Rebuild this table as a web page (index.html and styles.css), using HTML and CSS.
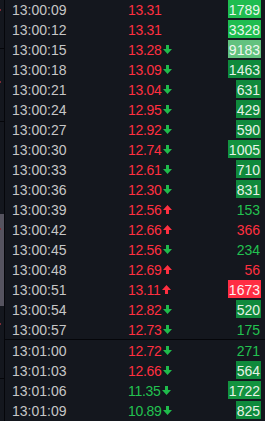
FILE: index.html
```html
<!DOCTYPE html>
<html>
<head>
<meta charset="utf-8">
<link rel="stylesheet" href="styles.css">
</head>
<body>
<div class="screen">
  <div class="strip">
    <div class="seg s1"><i class="dot d9"></i></div>
    <div class="hl"></div>
    <div class="seg s2"><i class="dot d32"></i></div>
    <div class="hl"></div>
    <div class="seg s3"></div>
    <div class="seg grey"><i class="dot d14"></i></div>
    <div class="seg s4"><i class="dot d17"></i></div>
    <div class="hl"></div>
    <div class="seg s5"></div>
  </div>
  <div class="list">
    <div class="row"><span class="time">13:00:09</span><span class="price red">13.31</span><span class="vol bg-bright">1789</span></div>
    <div class="row"><span class="time">13:00:12</span><span class="price red">13.31</span><span class="vol bg-bright">3328</span></div>
    <div class="row"><span class="time">13:00:15</span><span class="price red">13.28<svg class="arrow dn" viewBox="0 0 9 9"><path d="M3 0h3v4h3L4.5 9 0 4h3z"/></svg></span><span class="vol bg-pale">9183</span></div>
    <div class="row"><span class="time">13:00:18</span><span class="price red">13.09<svg class="arrow dn" viewBox="0 0 9 9"><path d="M3 0h3v4h3L4.5 9 0 4h3z"/></svg></span><span class="vol bg-dark">1463</span></div>
    <div class="row"><span class="time">13:00:21</span><span class="price red">13.04<svg class="arrow dn" viewBox="0 0 9 9"><path d="M3 0h3v4h3L4.5 9 0 4h3z"/></svg></span><span class="vol bg-dark">631</span></div>
    <div class="row"><span class="time">13:00:24</span><span class="price red">12.95<svg class="arrow dn" viewBox="0 0 9 9"><path d="M3 0h3v4h3L4.5 9 0 4h3z"/></svg></span><span class="vol bg-dark">429</span></div>
    <div class="row"><span class="time">13:00:27</span><span class="price red">12.92<svg class="arrow dn" viewBox="0 0 9 9"><path d="M3 0h3v4h3L4.5 9 0 4h3z"/></svg></span><span class="vol bg-dark">590</span></div>
    <div class="row"><span class="time">13:00:30</span><span class="price red">12.74<svg class="arrow dn" viewBox="0 0 9 9"><path d="M3 0h3v4h3L4.5 9 0 4h3z"/></svg></span><span class="vol bg-mid">1005</span></div>
    <div class="row"><span class="time">13:00:33</span><span class="price red">12.61<svg class="arrow dn" viewBox="0 0 9 9"><path d="M3 0h3v4h3L4.5 9 0 4h3z"/></svg></span><span class="vol bg-dark">710</span></div>
    <div class="row"><span class="time">13:00:36</span><span class="price red">12.30<svg class="arrow dn" viewBox="0 0 9 9"><path d="M3 0h3v4h3L4.5 9 0 4h3z"/></svg></span><span class="vol bg-dark">831</span></div>
    <div class="row"><span class="time">13:00:39</span><span class="price red">12.56<svg class="arrow up" viewBox="0 0 9 9"><path d="M3 9h3V5h3L4.5 0 0 5h3z"/></svg></span><span class="vol green">153</span></div>
    <div class="row"><span class="time">13:00:42</span><span class="price red">12.66<svg class="arrow up" viewBox="0 0 9 9"><path d="M3 9h3V5h3L4.5 0 0 5h3z"/></svg></span><span class="vol red">366</span></div>
    <div class="row"><span class="time">13:00:45</span><span class="price red">12.56<svg class="arrow dn" viewBox="0 0 9 9"><path d="M3 0h3v4h3L4.5 9 0 4h3z"/></svg></span><span class="vol green">234</span></div>
    <div class="row"><span class="time">13:00:48</span><span class="price red">12.69<svg class="arrow up" viewBox="0 0 9 9"><path d="M3 9h3V5h3L4.5 0 0 5h3z"/></svg></span><span class="vol red">56</span></div>
    <div class="row"><span class="time">13:00:51</span><span class="price red">13.11<svg class="arrow up" viewBox="0 0 9 9"><path d="M3 9h3V5h3L4.5 0 0 5h3z"/></svg></span><span class="vol bg-red">1673</span></div>
    <div class="row"><span class="time">13:00:54</span><span class="price red">12.82<svg class="arrow dn" viewBox="0 0 9 9"><path d="M3 0h3v4h3L4.5 9 0 4h3z"/></svg></span><span class="vol bg-dark">520</span></div>
    <div class="row"><span class="time">13:00:57</span><span class="price red">12.73<svg class="arrow dn" viewBox="0 0 9 9"><path d="M3 0h3v4h3L4.5 9 0 4h3z"/></svg></span><span class="vol green">175</span></div>
    <div class="sep"></div>
    <div class="row"><span class="time">13:01:00</span><span class="price red">12.72<svg class="arrow dn" viewBox="0 0 9 9"><path d="M3 0h3v4h3L4.5 9 0 4h3z"/></svg></span><span class="vol green">271</span></div>
    <div class="row"><span class="time">13:01:03</span><span class="price red">12.66<svg class="arrow dn" viewBox="0 0 9 9"><path d="M3 0h3v4h3L4.5 9 0 4h3z"/></svg></span><span class="vol bg-dark">564</span></div>
    <div class="row"><span class="time">13:01:06</span><span class="price green">11.35<svg class="arrow dn" viewBox="0 0 9 9"><path d="M3 0h3v4h3L4.5 9 0 4h3z"/></svg></span><span class="vol bg-mid">1722</span></div>
    <div class="row"><span class="time">13:01:09</span><span class="price green">10.89<svg class="arrow dn" viewBox="0 0 9 9"><path d="M3 0h3v4h3L4.5 9 0 4h3z"/></svg></span><span class="vol bg-dark">825</span></div>
    <div class="row"><span class="time"></span><span class="price"></span><span class="vol bg-red stub"></span></div>
  </div>
</div>
</body>
</html>
```
FILE: styles.css
```css
html, body {
  margin: 0;
  padding: 0;
  background: #14171e;
  overflow: hidden;
}
body {
  font-family: "Liberation Sans", Arial, sans-serif;
  font-size: 14px;
}
.screen {
  display: flex;
  height: 421px;
  overflow: hidden;
}
.strip {
  flex: none;
  width: 4px;
  border-right: 1px solid #05060a;
  display: flex;
  flex-direction: column;
}
.seg { flex: none; }
.s1 { height: 48px; }
.s2 { height: 72px; }
.s3 { height: 92px; }
.grey { height: 92px; background: #55535f; }
.s4 { height: 72px; }
.s5 { flex: 1; }
.hl { height: 1px; background: #05060a; flex: none; }
.dot {
  display: block;
  width: 1px;
  height: 2px;
  background: #7d2c36;
}
.d9 { margin-top: 9px; }
.d32 { margin-top: 32px; }
.d14 { margin-top: 14px; }
.d17 { margin-top: 17px; }
.list {
  flex: 1;
  margin-top: -1px;
  display: flex;
  flex-direction: column;
}
.row {
  flex: none;
  display: grid;
  grid-template-columns: 116px 1fr auto;
  height: 20px;
  padding: 0 4px 0 7px;
}
.time, .price {
  line-height: 17px;
  padding-top: 3px;
  white-space: nowrap;
}
.time { color: #c6c6c6; }
.price { letter-spacing: -0.3px; }
.red { color: #ff2f40; }
.green { color: #22c150; }
.arrow {
  width: 9px;
  height: 9px;
  margin-left: 1px;
  vertical-align: 1px;
}
.arrow.dn { fill: #1fbb4b; }
.arrow.up { fill: #ff2f40; }
.vol {
  box-sizing: border-box;
  height: 18px;
  margin-top: 1px;
  padding: 3px 1px 0 0.5px;
  line-height: 15px;
  text-align: right;
}
.stub { width: 25px; }
.bg-bright { background: #1fbd50; color: #eaf7ec; }
.bg-pale { background: #62c27f; color: #f0f8f1; }
.bg-dark { background: #0f8a3c; color: #e6f2e7; }
.bg-mid { background: #13933f; color: #e8f4e9; }
.bg-red { background: #ff2d43; color: #fff0f1; }
.sep {
  flex: none;
  height: 1px;
  background: #05060a;
}
```
